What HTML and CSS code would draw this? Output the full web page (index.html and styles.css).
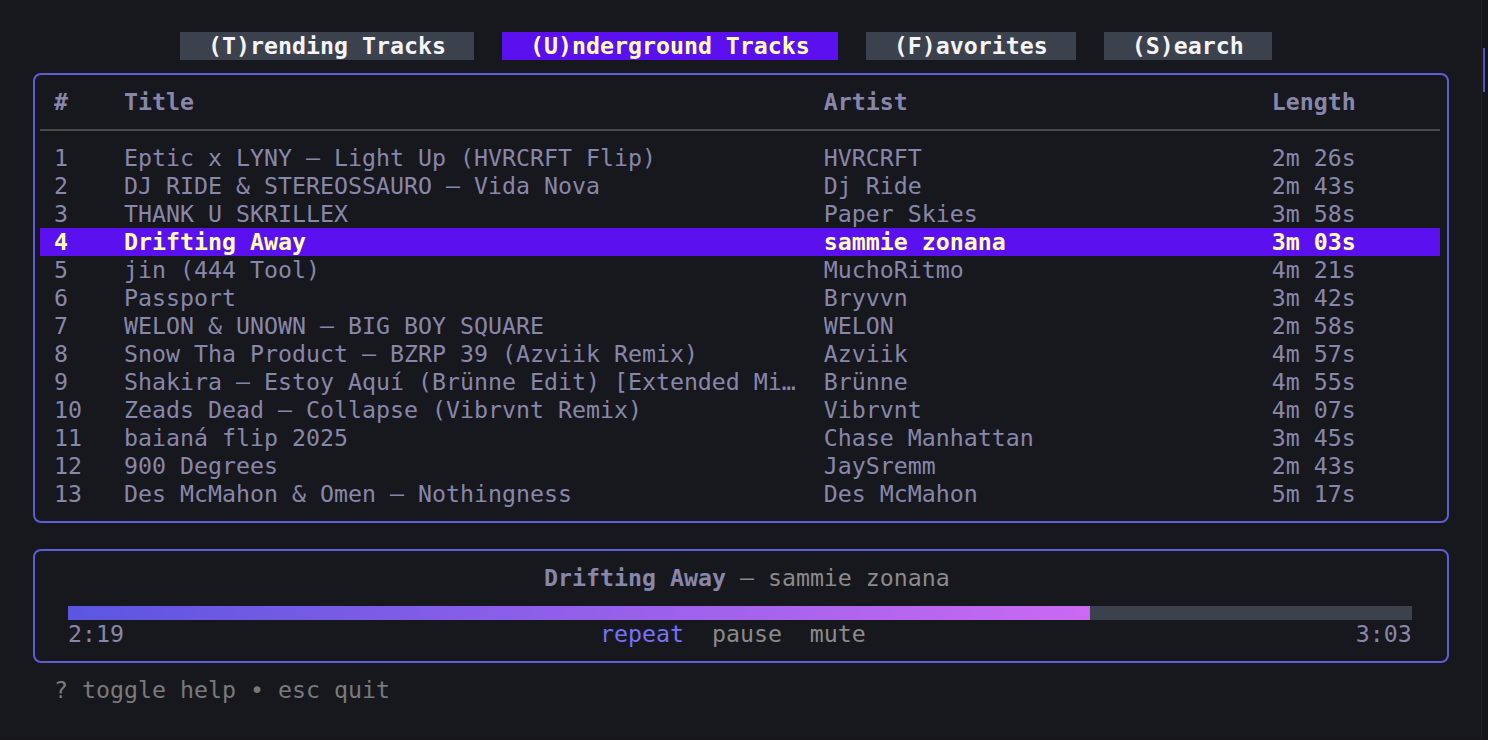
FILE: index.html
```html
<!DOCTYPE html>
<html lang="en">
<head>
<meta charset="utf-8">
<title>Tracks</title>
<link rel="stylesheet" href="styles.css">
</head>
<body>
<div class="screen">
  <nav class="tabs">
    <span class="tab">(T)rending Tracks</span>
    <span class="tab active">(U)nderground Tracks</span>
    <span class="tab">(F)avorites</span>
    <span class="tab">(S)earch</span>
  </nav>

  <section class="panel tracks">
    <div class="row head"><span>#</span><span>Title</span><span>Artist</span><span>Length</span></div>
    <div class="sep"></div>
    <div class="row"><span>1</span><span>Eptic x LYNY – Light Up (HVRCRFT Flip)</span><span>HVRCRFT</span><span>2m 26s</span></div>
    <div class="row"><span>2</span><span>DJ RIDE &amp; STEREOSSAURO – Vida Nova</span><span>Dj Ride</span><span>2m 43s</span></div>
    <div class="row"><span>3</span><span>THANK U SKRILLEX</span><span>Paper Skies</span><span>3m 58s</span></div>
    <div class="row selected"><span>4</span><span>Drifting Away</span><span>sammie zonana</span><span>3m 03s</span></div>
    <div class="row"><span>5</span><span>jin (444 Tool)</span><span>MuchoRitmo</span><span>4m 21s</span></div>
    <div class="row"><span>6</span><span>Passport</span><span>Bryvvn</span><span>3m 42s</span></div>
    <div class="row"><span>7</span><span>WELON &amp; UNOWN – BIG BOY SQUARE</span><span>WELON</span><span>2m 58s</span></div>
    <div class="row"><span>8</span><span>Snow Tha Product – BZRP 39 (Azviik Remix)</span><span>Azviik</span><span>4m 57s</span></div>
    <div class="row"><span>9</span><span>Shakira – Estoy Aquí (Brünne Edit) [Extended Mi…</span><span>Brünne</span><span>4m 55s</span></div>
    <div class="row"><span>10</span><span>Zeads Dead – Collapse (Vibrvnt Remix)</span><span>Vibrvnt</span><span>4m 07s</span></div>
    <div class="row"><span>11</span><span>baianá flip 2025</span><span>Chase Manhattan</span><span>3m 45s</span></div>
    <div class="row"><span>12</span><span>900 Degrees</span><span>JaySremm</span><span>2m 43s</span></div>
    <div class="row"><span>13</span><span>Des McMahon &amp; Omen – Nothingness</span><span>Des McMahon</span><span>5m 17s</span></div>
  </section>

  <section class="panel player">
    <div class="now"><b class="now-title">Drifting Away</b><span class="now-artist"> – sammie zonana</span></div>
    <div class="bar-row"><div class="bar"><div class="fill" style="width:73ch"></div></div></div>
    <div class="ctrl"><span class="time">2:19</span><span class="controls"><span class="on">repeat</span>  pause  mute</span><span class="time end">3:03</span></div>
  </section>

  <div class="help"><span class="key">?</span> <span class="desc">toggle help</span> <span class="dot">•</span> <span class="key">esc</span> <span class="desc">quit</span></div>

  <div class="scrollbar"><div class="thumb"></div></div>
</div>
</body>
</html>
```
FILE: styles.css
```css
html, body {
  margin: 0;
  padding: 0;
  background: #17181d;
}

.screen {
  position: relative;
  width: 1488px;
  height: 740px;
  overflow: hidden;
  padding-top: 32px;
  box-sizing: border-box;
  font-family: "DejaVu Sans Mono", "Liberation Mono", monospace;
  font-size: 23.254px;
  line-height: 28px;
  color: #8787ab;
}

/* tabs */
.tabs {
  display: flex;
  gap: 2ch;
  height: 28px;
  margin-left: 180px;
}

.tab {
  padding: 0 2ch;
  background: #3c414e;
  color: #f4f4f4;
  font-weight: bold;
  white-space: pre;
}

.tab.active {
  background: #5b10ef;
  color: #ffffaf;
}

/* panels */
.panel {
  box-sizing: border-box;
  width: 1416px;
  margin-left: 33px;
  border: 2px solid #5d5dd6;
  border-radius: 8px;
  padding: 13px 7px 13px 5px;
}

.tracks {
  margin-top: 13px;
}

.row {
  display: grid;
  grid-template-columns: 5ch 50ch 32ch 12ch;
  padding-left: 1ch;
  height: 28px;
}

.row > span {
  overflow: hidden;
  white-space: pre;
}

.row.head {
  font-weight: bold;
}

.row.selected {
  background: #5b10ef;
  color: #ffffaf;
  font-weight: bold;
}

.sep {
  height: 28px;
  display: flex;
  align-items: center;
}

.sep::before {
  content: "";
  display: block;
  width: 100%;
  height: 2px;
  background: #4a4a4c;
}

/* player */
.player {
  margin-top: 26px;
}

.now {
  height: 28px;
  padding-left: 36ch;
  white-space: pre;
}

.now-title {
  font-weight: bold;
  color: #8787ab;
}

.now-artist {
  color: #8a8a8a;
}

.bar-row {
  height: 28px;
  display: flex;
  align-items: flex-end;
  padding-left: 2ch;
}

.bar {
  width: 96ch;
  height: 14px;
  background: #3c414e;
}

.fill {
  height: 100%;
  background: linear-gradient(90deg, #5a56e0, #ee6ff8);
  background-size: 96ch 100%;
  background-repeat: no-repeat;
}

.ctrl {
  display: grid;
  grid-template-columns: 38ch 19ch 39ch;
  height: 28px;
  padding-left: 2ch;
  white-space: pre;
}

.time {
  color: #8787ab;
}

.time.end {
  justify-self: end;
}

.controls {
  color: #8a8a8a;
}

.controls .on {
  color: #7571f9;
}

/* help */
.help {
  margin-top: 13px;
  margin-left: 54px;
  height: 28px;
  color: #7a7a7a;
  white-space: pre;
}

.help .dot {
  color: #777777;
}

/* terminal scrollbar overlay */
.scrollbar {
  position: absolute;
  top: 0;
  right: 0;
  width: 6px;
  height: 740px;
  background: #141519;
  border-left: 1px solid #1f2025;
}

.thumb {
  position: absolute;
  top: 48px;
  left: 1px;
  width: 2px;
  height: 44px;
  background: #5055b8;
}
```
